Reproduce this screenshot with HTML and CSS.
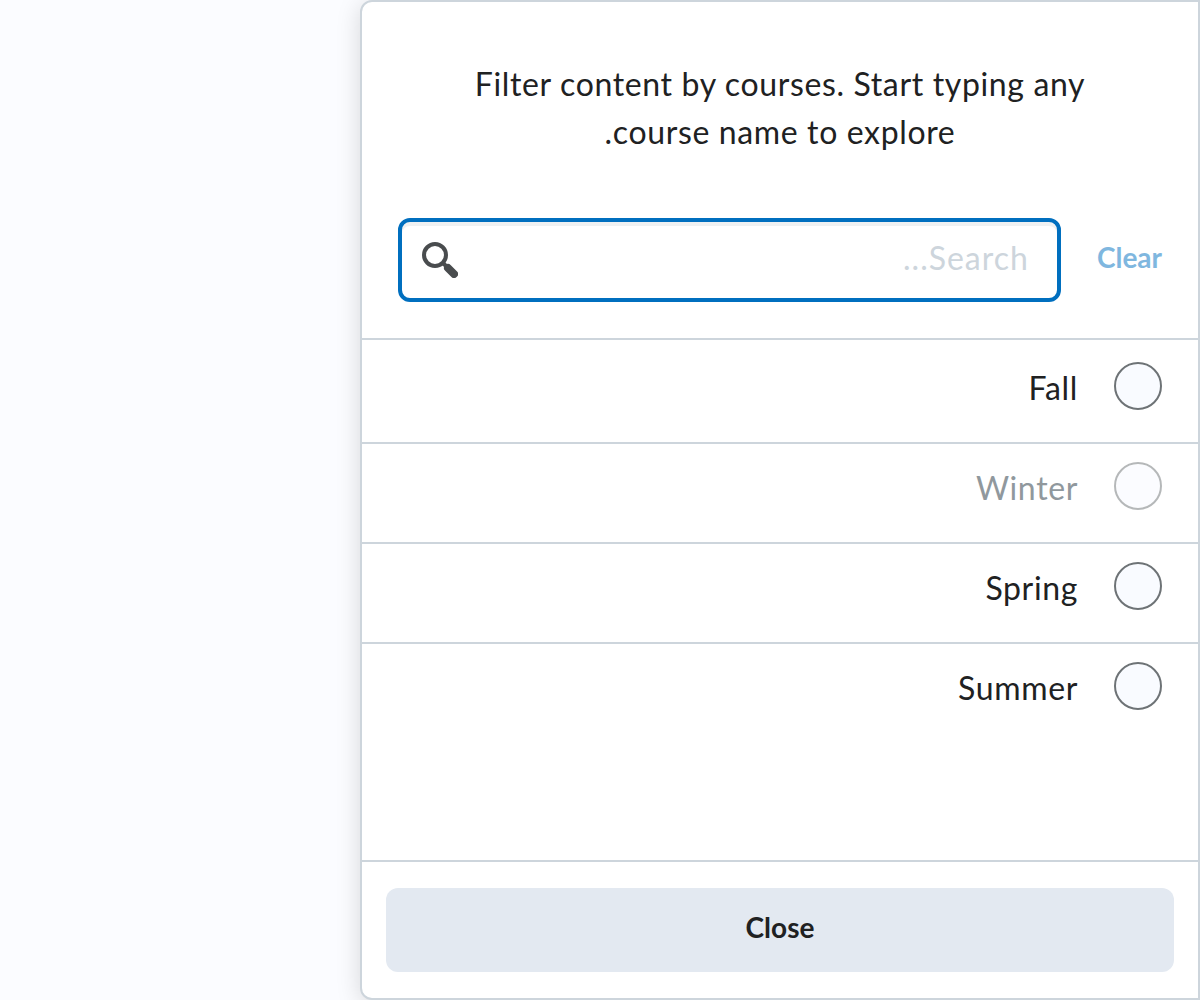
FILE: index.html
```html
<!DOCTYPE html>
<html lang="en" dir="rtl">
<head>
<meta charset="utf-8">
<meta name="viewport" content="width=device-width, initial-scale=1">
<title>Filter by course</title>
<link rel="stylesheet" href="styles.css">
</head>
<body>
<main class="panel">
  <p class="intro">Filter content by courses. Start typing any course name to explore.</p>
  <form class="search">
    <button class="clear" type="button" disabled>Clear</button>
    <div class="field">
      <input class="field-input" type="text" placeholder="Search..." aria-label="Search courses">
      <svg class="field-icon" viewBox="0 0 36 36" aria-hidden="true">
        <circle cx="13" cy="13" r="11" fill="none" stroke="#494c4e" stroke-width="4"/>
        <path d="M21 21l4 4" stroke="#494c4e" stroke-width="4"/>
        <path d="M26 26l6 6" stroke="#494c4e" stroke-width="8" stroke-linecap="round"/>
      </svg>
    </div>
  </form>
  <ul class="list">
    <li class="item"><label class="option"><input class="check" type="checkbox"><span class="name">Fall</span></label></li>
    <li class="item"><label class="option"><input class="check" type="checkbox" disabled><span class="name">Winter</span></label></li>
    <li class="item"><label class="option"><input class="check" type="checkbox"><span class="name">Spring</span></label></li>
    <li class="item"><label class="option"><input class="check" type="checkbox"><span class="name">Summer</span></label></li>
  </ul>
  <footer class="footer"><button class="close" type="button">Close</button></footer>
</main>
</body>
</html>
```
FILE: styles.css
```css
* {
  box-sizing: border-box;
}

body {
  margin: 0;
  background: #fbfcff;
  color: #202122;
  font-family: Lato, sans-serif;
  font-size: 32px;
  line-height: 48px;
  letter-spacing: 0.02em;
}

.panel {
  display: flex;
  flex-direction: column;
  width: 70%;
  min-height: 100vh;
  border: 2px solid #cdd5dc;
  border-radius: 12px 0 0 12px;
  background: #fff;
  box-shadow: 0 4px 24px rgba(0, 0, 0, 0.15);
}

.intro {
  margin: 0;
  padding: 58px 96px 62px;
  text-align: center;
}

.search {
  display: flex;
  align-items: center;
  gap: 36px;
  padding: 0 36px 36px;
}

.clear {
  padding: 0 0 6px;
  border: 0;
  background: none;
  color: #7fb7df;
  font: bold 28px/40px Lato, sans-serif;
}

.field {
  display: flex;
  flex: 1;
  align-items: center;
  height: 84px;
  padding: 0 28px 0 20px;
  border: 4px solid #006fbf;
  border-radius: 12px;
  box-shadow: inset 0 4px 0 rgba(177, 185, 190, 0.2);
}

.field-input {
  flex: 1;
  min-width: 0;
  padding: 0 0 4px;
  border: 0;
  outline: 0;
  background: none;
  color: inherit;
  font: inherit;
  letter-spacing: 1px;
}

.field-input::placeholder {
  color: #cdd5dc;
  opacity: 1;
}

.field-icon {
  width: 36px;
  height: 36px;
}

.list {
  flex: 1;
  margin: 0;
  padding: 4px 0 0;
  border-top: 2px solid #cdd5dc;
  list-style: none;
}

.item {
  padding: 18px 36px 30px;
}

.item + .item {
  border-top: 2px solid #cdd5dc;
}

.option {
  display: flex;
  gap: 36px;
}

.name {
  padding-top: 2px;
}

.check {
  appearance: none;
  width: 48px;
  height: 48px;
  margin: 0;
  border: 2px solid #6e7376;
  border-radius: 50%;
  background: #f9fbff;
}

.check:disabled {
  opacity: 0.5;
}

.check:disabled + .name {
  color: #90989d;
}

.footer {
  padding: 26px 24px;
  border-top: 2px solid #cdd5dc;
}

.close {
  display: block;
  width: 100%;
  height: 84px;
  padding: 0 0 6px;
  border: 0;
  border-radius: 12px;
  background: #e3e9f1;
  color: #202122;
  font: bold 28px/40px Lato, sans-serif;
}
```
